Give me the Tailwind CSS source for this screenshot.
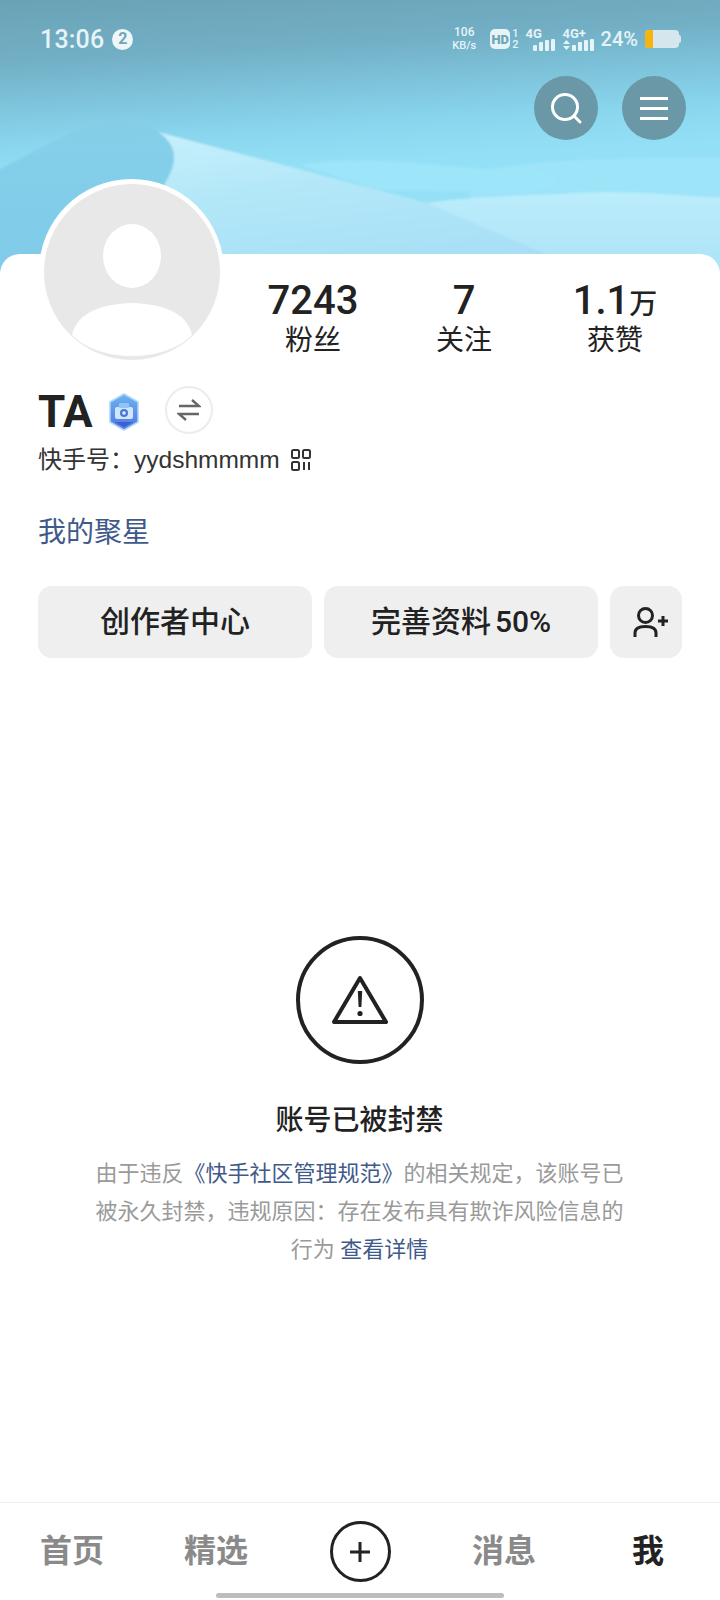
<!doctype html>
<html>

<head>
  <meta charset="UTF-8" />
  <meta name="viewport" content="width=device-width, initial-scale=1.0" />
  <title>快手 个人主页</title>
  <script src="https://cdn.jsdelivr.net/npm/@tailwindcss/browser@4"></script>
</head>

<body class="bg-white">
  <div class="flex h-[1600px] w-[720px] flex-col overflow-hidden bg-white font-['Roboto','Noto_Sans_CJK_SC',sans-serif] text-[#222222]">

    <!-- header with dunes -->
    <header class="relative h-[274px] shrink-0">
      <svg class="absolute inset-0" width="720" height="274" viewBox="0 0 720 274">
        <defs>
          <linearGradient id="sky" x1="0" y1="0" x2="0.15" y2="1">
            <stop offset="0" stop-color="#6aa2b5" />
            <stop offset="0.22" stop-color="#72afc5" />
            <stop offset="0.5" stop-color="#87d4ec" />
            <stop offset="0.65" stop-color="#93e0f6" />
            <stop offset="1" stop-color="#97e0f6" />
          </linearGradient>
          <linearGradient id="lit" x1="0" y1="0" x2="0.3" y2="1">
            <stop offset="0" stop-color="#c8f0fb" />
            <stop offset="0.45" stop-color="#b2e7f8" />
            <stop offset="1" stop-color="#a8dff6" />
          </linearGradient>
          <linearGradient id="shade" x1="0" y1="0" x2="0" y2="1">
            <stop offset="0" stop-color="#84cce5" stop-opacity="0.7" />
            <stop offset="0.18" stop-color="#84cfe9" />
            <stop offset="1" stop-color="#7fcbe9" />
          </linearGradient>
          <linearGradient id="near" x1="0" y1="0" x2="0" y2="1">
            <stop offset="0" stop-color="#bcedfb" />
            <stop offset="1" stop-color="#a9e1f7" />
          </linearGradient>
          <filter id="soft" x="-5%" y="-5%" width="110%" height="110%">
            <feGaussianBlur stdDeviation="1" />
          </filter>
        </defs>
        <rect width="720" height="274" fill="url(#sky)" />
        <g filter="url(#soft)">
          <path d="M470 172C540 158 650 158 730 157V210H470Z" fill="#9de4f9" />
          <path d="M300 165C360 155 430 165 500 170C545 168 565 178 552 186C500 195 430 190 380 190Z" fill="#9de5f9" />
          <path d="M427 203C480 195 540 196 575 193C630 190 680 196 730 198V284H560Z" fill="url(#near)" />
          <path d="M158 132L280 164L427 203L560 260V284H150L165 180C180 160 175 143 158 132Z" fill="url(#lit)" />
          <path d="M-10 174C40 150 90 118 122 120C140 120 150 126 158 132C175 143 180 160 165 183L150 284H-10Z" fill="url(#shade)" />
        </g>
      </svg>

      <div class="relative flex h-[76px] items-center justify-between pt-[2px] pl-[40px] pr-[39px] text-[#e6f3f7]">
        <div class="flex items-center gap-[8px]">
          <span class="text-[25px] font-medium leading-none tracking-[0.2px]">13:06</span>
          <span class="flex h-[21px] w-[21px] items-center justify-center rounded-full bg-[#eef6f8] text-[16px] font-bold leading-none text-[#6ea6b8]">2</span>
        </div>
        <div class="flex items-center">
          <div class="flex w-[26px] flex-col items-center text-[12px] font-medium leading-[13px]">
            <span>106</span>
            <span class="text-[11px]">KB/s</span>
          </div>
          <div class="ml-[13px] flex h-[20px] w-[20px] items-center justify-center rounded-[5px] bg-[#e6f3f7] text-[13px] font-black leading-none text-[#6ea6b8]">HD</div>
          <div class="ml-[2px] flex flex-col items-center text-[11px] font-medium leading-[11px]">
            <span>1</span>
            <span>2</span>
          </div>
          <div class="ml-[7px] flex w-[32px] flex-col">
            <span class="h-[13px] text-[13px] font-bold leading-[13px]">4G</span>
            <svg class="-mt-[2px]" width="32" height="13" viewBox="0 0 32 13" fill="#e6f3f7">
              <rect x="7" y="7" width="4" height="6" rx="1" />
              <rect x="13" y="4" width="4" height="9" rx="1" />
              <rect x="19" y="2" width="4" height="11" rx="1" />
              <rect x="25" y="1" width="4" height="12" rx="1" />
            </svg>
          </div>
          <div class="ml-[4px] flex w-[32px] flex-col">
            <span class="h-[13px] pl-[1px] text-[13px] font-bold leading-[13px]">4G+</span>
            <svg class="-mt-[2px]" width="32" height="13" viewBox="0 0 32 13" fill="#e6f3f7">
              <path d="M1 6h7l-3.500-4zM1 8h7l-3.500 4z" />
              <rect x="10" y="7" width="4" height="6" rx="1" />
              <rect x="16" y="4" width="4" height="9" rx="1" />
              <rect x="22" y="2" width="4" height="11" rx="1" />
              <rect x="28" y="1" width="4" height="12" rx="1" />
            </svg>
          </div>
          <span class="ml-[7px] text-[20px] font-medium leading-none">24%</span>
          <div class="ml-[7px] flex items-center">
            <div class="h-[18px] w-[34px] overflow-hidden rounded-[4px] bg-[#d5e6ed]">
              <div class="h-full w-[8px] bg-[#f6b40e]"></div>
            </div>
            <div class="h-[8px] w-[2px] rounded-r-[2px] bg-[#d5e6ed]"></div>
          </div>
        </div>
      </div>

      <div class="relative flex justify-end gap-[24px] pr-[34px]">
        <button class="flex h-[64px] w-[64px] items-center justify-center rounded-full bg-[#6a98a6]">
          <svg width="34" height="34" viewBox="0 0 34 34" fill="none" stroke="#ffffff" stroke-width="3" stroke-linecap="round">
            <circle cx="16" cy="16" r="12.500" />
            <path d="M25 25l6 6" />
          </svg>
        </button>
        <button class="flex h-[64px] w-[64px] flex-col items-center justify-center gap-[7px] rounded-full bg-[#6a98a6]">
          <span class="h-[3px] w-[28px] bg-white"></span>
          <span class="h-[3px] w-[28px] bg-white"></span>
          <span class="h-[3px] w-[28px] bg-white"></span>
        </button>
      </div>

      <!-- avatar sits over the card edge -->
      <div class="absolute left-[39px] top-[179px] z-10 h-[185px] w-[185px] rounded-full bg-white p-[4.500px]">
        <svg width="176" height="176" viewBox="0 0 176 176">
          <defs>
            <clipPath id="disc">
              <circle cx="88" cy="88" r="88" />
            </clipPath>
          </defs>
          <circle cx="88" cy="88" r="88" fill="#e8e8e8" />
          <ellipse cx="88" cy="72" rx="29" ry="32" fill="#ffffff" />
          <path clip-path="url(#disc)" d="M28 151C32 132 52 120 88 119C124 120 144 132 148 151C134 165 112 172 88 172C64 172 42 165 28 151Z" fill="#ffffff" />
        </svg>
      </div>
    </header>

    <main class="z-0 -mt-[20px] flex flex-1 flex-col rounded-t-[20px] bg-white pl-[38px] pr-[39px]">
      <div class="-mr-[10px] flex pl-[199.500px] pt-[24px]">
        <div class="flex w-[151px] shrink-0 flex-col items-center">
          <span class="h-[45px] text-[40px] font-medium leading-[46px]">7243</span>
          <span class="text-[28px] leading-[36px]">粉丝</span>
        </div>
        <div class="flex w-[151px] shrink-0 flex-col items-center">
          <span class="h-[45px] text-[40px] font-medium leading-[46px]">7</span>
          <span class="text-[28px] leading-[36px]">关注</span>
        </div>
        <div class="flex w-[151px] shrink-0 flex-col items-center">
          <span class="h-[45px] text-[40px] font-medium leading-[46px]">1.1<span class="text-[28px] leading-none">万</span></span>
          <span class="text-[28px] leading-[36px]">获赞</span>
        </div>
      </div>

      <div class="mt-[27px] flex h-[52px] items-center">
        <span class="text-[44px] font-bold leading-none">TA</span>
        <svg class="ml-[14px]" width="34" height="40" viewBox="0 0 34 40">
          <defs>
            <linearGradient id="badge" x1="0" y1="0" x2="0" y2="1">
              <stop offset="0" stop-color="#6fb4ee" />
              <stop offset="1" stop-color="#4f74e4" />
            </linearGradient>
          </defs>
          <path d="M17 2L31 10V30L17 38L3 30V10Z" fill="url(#badge)" stroke="#a9d8f6" stroke-width="1.500" stroke-linejoin="round" />
          <rect x="8" y="15" width="18" height="12" rx="2" fill="#cfe6fb" />
          <rect x="12" y="11" width="10" height="5" rx="1" fill="#8fc4f4" />
          <circle cx="17" cy="21" r="4" fill="#4a78d8" />
          <circle cx="17" cy="21" r="1.800" fill="#dff0fd" />
          <path d="M8 30H26L17 35Z" fill="#3c5fd6" />
        </svg>
        <div class="-mt-[4px] ml-[24px] flex h-[48px] w-[48px] items-center justify-center rounded-full border-2 border-[#ececec]">
          <svg width="24" height="24" viewBox="0 0 24 24" fill="none" stroke="#666666" stroke-width="2.400">
            <path d="M2 8H22L15 2" />
            <path d="M22 16H2L9 22" />
          </svg>
        </div>
      </div>

      <div class="mt-[4px] flex h-[36px] items-center leading-none text-[#333333]">
        <span class="text-[24px]">快手号：</span>
        <span class="font-['Liberation_Sans'] text-[24.500px]">yydshmmmm</span>
        <svg class="ml-[11px]" width="20" height="22" viewBox="0 0 20 22" fill="none" stroke="#333333" stroke-width="2">
          <rect x="1" y="1" width="7" height="8" rx="1.500" />
          <rect x="12" y="1" width="7" height="8" rx="1.500" />
          <rect x="1" y="13" width="7" height="8" rx="1.500" />
          <path d="M13 13V21M18 13V21" />
        </svg>
      </div>

      <div class="mt-[35px] text-[28px] leading-[40px] text-[#3f5a8a]">我的聚星</div>

      <div class="-mr-[1px] mt-[33px] flex gap-[12px]">
        <button class="h-[72px] w-[274px] shrink-0 rounded-[14px] bg-[#efefef] text-[30px] font-medium leading-none">创作者中心</button>
        <button class="flex h-[72px] w-[274px] shrink-0 items-center justify-center gap-[4px] rounded-[14px] bg-[#efefef] text-[30px] font-medium leading-none">
          <span>完善资料</span>
          <span>50%</span>
        </button>
        <button class="flex h-[72px] w-[72px] shrink-0 items-center justify-center rounded-[14px] bg-[#efefef] pl-[9px]">
          <svg width="35" height="30" viewBox="0 0 35 30" fill="none" stroke="#222222" stroke-width="3">
            <circle cx="12.500" cy="8.500" r="7" />
            <path d="M2 30V26C2 21 6 19.500 12.500 19.500C19 19.500 23 21 23 26V30" />
            <path d="M25 14H35M30 9V19" />
          </svg>
        </button>
      </div>

      <div class="mt-[278px] flex flex-col items-center">
        <div class="flex h-[128px] w-[128px] items-center justify-center rounded-full border-4 border-[#222222]">
          <svg width="56" height="50" viewBox="0 0 56 50">
            <path d="M28 3L54 47H2Z" fill="none" stroke="#222222" stroke-width="4" stroke-linejoin="round" />
            <path d="M25.800 16H30.200L29.400 32H26.600Z" fill="#222222" />
            <circle cx="28" cy="38.500" r="2.600" fill="#222222" />
          </svg>
        </div>
        <h1 class="mt-[37px] text-[28px] font-medium leading-[40px]">账号已被封禁</h1>
        <p class="mt-[14px] w-[540px] text-center text-[22px] leading-[38px] text-[#9a9a9a]">由于违反<span class="text-[#3f5a8a]">《快手社区管理规范》</span>的相关规定，该账号已被永久封禁，违规原因：存在发布具有欺诈风险信息的行为 <span class="text-[#3f5a8a]">查看详情</span></p>
      </div>
    </main>

    <nav class="relative flex h-[98px] shrink-0 items-start border-t border-[#efefef] bg-white pt-[18px] text-[32px] font-bold leading-[60px] text-[#8a8a8a]">
      <span class="w-[144px] text-center">首页</span>
      <span class="w-[144px] text-center">精选</span>
      <div class="flex w-[144px] justify-center">
        <div class="flex h-[61px] w-[61px] items-center justify-center rounded-full border-[3px] border-[#222222]">
          <svg width="22" height="22" viewBox="0 0 22 22" stroke="#222222" stroke-width="3">
            <path d="M11 1V21M1 11H21" />
          </svg>
        </div>
      </div>
      <span class="w-[144px] text-center">消息</span>
      <span class="w-[144px] text-center text-[#222222]">我</span>
      <div class="absolute bottom-[2px] left-[216px] h-[5px] w-[288px] rounded-full bg-[#bdbdbd]"></div>
    </nav>
  </div>
</body>

</html>
